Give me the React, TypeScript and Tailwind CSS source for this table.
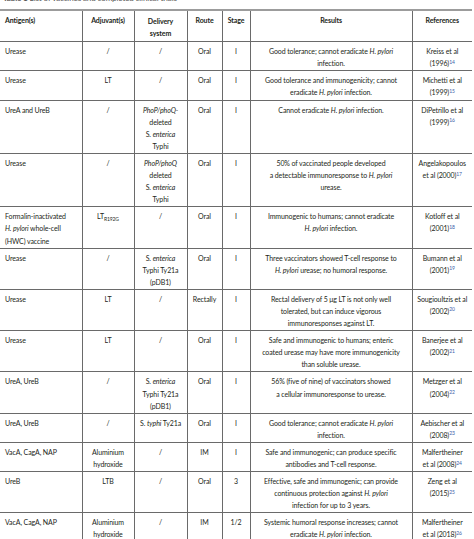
import type { ReactNode } from "react";

type Row = {
  antigen: ReactNode[];
  adjuvant: ReactNode[];
  delivery: ReactNode[];
  route: string;
  stage: string;
  results: ReactNode[];
  refs: ReactNode[];
};

const Ref = ({ n }: { n: number }) => (
  <sup className="text-[5px] text-[#3b5ca8]">{n}</sup>
);

const Hp = () => <i>H. pylori</i>;

const rows: Row[] = [
  {
    antigen: ["Urease"],
    adjuvant: ["/"],
    delivery: ["/"],
    route: "Oral",
    stage: "I",
    results: [
      <>Good tolerance; cannot eradicate <Hp /></>,
      "infection.",
    ],
    refs: ["Kreiss et al", <>(1996)<Ref n={14} /></>],
  },
  {
    antigen: ["Urease"],
    adjuvant: ["LT"],
    delivery: ["/"],
    route: "Oral",
    stage: "I",
    results: [
      "Good tolerance and immunogenicity; cannot",
      <>eradicate <Hp /> infection.</>,
    ],
    refs: ["Michetti et al", <>(1999)<Ref n={15} /></>],
  },
  {
    antigen: ["UreA and UreB"],
    adjuvant: ["/"],
    delivery: [<i>PhoP/phoQ-</i>, "deleted", <>S. <i>enterica</i></>, "Typhi"],
    route: "Oral",
    stage: "I",
    results: [<>Cannot eradicate <Hp /> infection.</>],
    refs: ["DiPetrillo et al", <>(1999)<Ref n={16} /></>],
  },
  {
    antigen: ["Urease"],
    adjuvant: ["/"],
    delivery: [<i>PhoP/phoQ</i>, "deleted", <>S. <i>enterica</i></>, "Typhi"],
    route: "Oral",
    stage: "I",
    results: [
      "50% of vaccinated people developed",
      <>a detectable immunoresponse to <Hp /></>,
      "urease.",
    ],
    refs: ["Angelakopoulos", <>et al (2000)<Ref n={17} /></>],
  },
  {
    antigen: ["Formalin-inactivated", <><Hp /> whole-cell</>, "(HWC) vaccine"],
    adjuvant: [
      <>
        LT<sub className="text-[5px]">R192G</sub>
      </>,
    ],
    delivery: ["/"],
    route: "Oral",
    stage: "I",
    results: [
      "Immunogenic to humans; cannot eradicate",
      <><Hp /> infection.</>,
    ],
    refs: ["Kotloff et al", <>(2001)<Ref n={18} /></>],
  },
  {
    antigen: ["Urease"],
    adjuvant: ["/"],
    delivery: [<>S. <i>enterica</i></>, "Typhi Ty21a", "(pDB1)"],
    route: "Oral",
    stage: "I",
    results: [
      "Three vaccinators showed T-cell response to",
      <><Hp /> urease; no humoral response.</>,
    ],
    refs: ["Bumann et al", <>(2001)<Ref n={19} /></>],
  },
  {
    antigen: ["Urease"],
    adjuvant: ["LT"],
    delivery: ["/"],
    route: "Rectally",
    stage: "I",
    results: [
      "Rectal delivery of 5 μg LT is not only well",
      "tolerated, but can induce vigorous",
      "immunoresponses against LT.",
    ],
    refs: ["Sougioultzis et al", <>(2002)<Ref n={20} /></>],
  },
  {
    antigen: ["Urease"],
    adjuvant: ["LT"],
    delivery: ["/"],
    route: "Oral",
    stage: "I",
    results: [
      "Safe and immunogenic to humans; enteric",
      "coated urease may have more immunogenicity",
      "than soluble urease.",
    ],
    refs: ["Banerjee et al", <>(2002)<Ref n={21} /></>],
  },
  {
    antigen: ["UreA, UreB"],
    adjuvant: ["/"],
    delivery: [<>S. <i>enterica</i></>, "Typhi Ty21a", "(pDB1)"],
    route: "Oral",
    stage: "I",
    results: [
      "56% (five of nine) of vaccinators showed",
      "a cellular immunoresponse to urease.",
    ],
    refs: ["Metzger et al", <>(2004)<Ref n={22} /></>],
  },
  {
    antigen: ["UreA, UreB"],
    adjuvant: ["/"],
    delivery: [<>S. <i>typhi</i> Ty21a</>],
    route: "Oral",
    stage: "I",
    results: [
      <>Good tolerance; cannot eradicate <Hp /></>,
      "infection.",
    ],
    refs: ["Aebischer et al", <>(2008)<Ref n={23} /></>],
  },
  {
    antigen: ["VacA, CagA, NAP"],
    adjuvant: ["Aluminium", "hydroxide"],
    delivery: ["/"],
    route: "IM",
    stage: "I",
    results: [
      "Safe and immunogenic; can produce specific",
      "antibodies and T-cell response.",
    ],
    refs: ["Malfertheiner", <>et al (2008)<Ref n={24} /></>],
  },
  {
    antigen: ["UreB"],
    adjuvant: ["LTB"],
    delivery: ["/"],
    route: "Oral",
    stage: "3",
    results: [
      "Effective, safe and immunogenic; can provide",
      <>continuous protection against <Hp /></>,
      "infection for up to 3 years.",
    ],
    refs: ["Zeng et al", <>(2015)<Ref n={25} /></>],
  },
  {
    antigen: ["VacA, CagA, NAP"],
    adjuvant: ["Aluminium", "hydroxide"],
    delivery: ["/"],
    route: "IM",
    stage: "1/2",
    results: [
      "Systemic humoral response increases; cannot",
      <>eradicate <Hp /> infection.</>,
    ],
    refs: ["Malfertheiner", <>et al (2018)<Ref n={26} /></>],
  },
];

const Lines = ({ lines }: { lines: ReactNode[] }) => (
  <>
    {lines.map((l, i) => (
      <div key={i} className="h-[12.1px] whitespace-nowrap">
        {l}
      </div>
    ))}
  </>
);

const cell = "border-b border-[#6a6a6a] pt-[3px] pb-[1px] align-top leading-[12.1px]";
const inner = `${cell} border-l text-center px-[2px]`;

export default function App() {
  return (
    <div
      className="h-[539px] w-[474px] overflow-hidden bg-white text-[7px] text-[#231f20] tracking-[-0.1px]"
      style={{ fontFamily: "Lato, 'Open Sans', sans-serif" }}
    >
      <div className="-mt-[8px] h-[17px] pl-[3px] text-[8px] leading-[12px] text-[#555]">
        <b>Table 1</b> List of vaccines and completed clinical trials
      </div>
      <table className="w-[472px] table-fixed border-collapse">
        <colgroup>
          <col className="w-[82px]" />
          <col className="w-[52px]" />
          <col className="w-[53px]" />
          <col className="w-[35px]" />
          <col className="w-[28px]" />
          <col className="w-[162px]" />
          <col className="w-[60px]" />
        </colgroup>
        <thead>
          <tr className="border-t-2 border-[#9c9c9c] font-bold">
            <th className={`${cell} pl-[5px] text-left`}>Antigen(s)</th>
            <th className={inner}>Adjuvant(s)</th>
            <th className={`${inner} !pt-[4px] !pb-[2px]`}>
              <Lines lines={["Delivery", "system"]} />
            </th>
            <th className={inner}>Route</th>
            <th className={inner}>Stage</th>
            <th className={inner}>Results</th>
            <th className={inner}>References</th>
          </tr>
        </thead>
        <tbody>
          {rows.map((r, i) => (
            <tr key={i}>
              <td className={`${cell} pl-[5px] text-left`}>
                <Lines lines={r.antigen} />
              </td>
              <td className={inner}>
                <Lines lines={r.adjuvant} />
              </td>
              <td className={inner}>
                <Lines lines={r.delivery} />
              </td>
              <td className={inner}>{r.route}</td>
              <td className={inner}>{r.stage}</td>
              <td className={inner}>
                <Lines lines={r.results} />
              </td>
              <td className={inner}>
                <Lines lines={r.refs} />
              </td>
            </tr>
          ))}
        </tbody>
      </table>
    </div>
  );
}
